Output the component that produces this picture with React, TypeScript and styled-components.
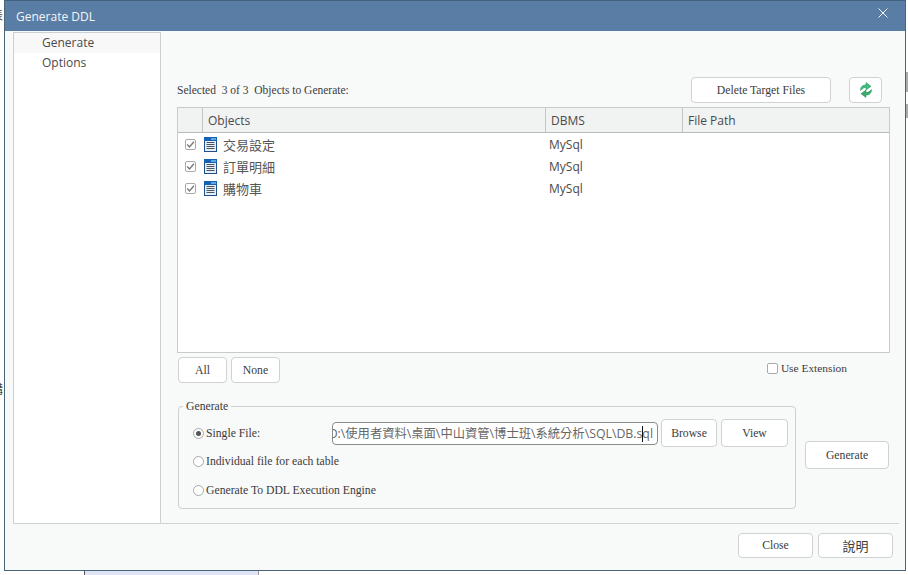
import React from 'react';
import styled, { createGlobalStyle } from 'styled-components';

const serif = '"Liberation Serif", "Noto Sans CJK TC", serif';
const sans = '"Open Sans", "Noto Sans CJK TC", sans-serif';

const GlobalStyle = createGlobalStyle`
  html, body {
    margin: 0;
    padding: 0;
    background: #fff;
    overflow: hidden;
  }
  * {
    box-sizing: border-box;
  }
`;

const Page = styled.div`
  position: relative;
  width: 908px;
  height: 575px;
  padding: 0 2px 4px 4px;
  background: #fff;
`;

const BackdropStrip = styled.div`
  position: absolute;
  left: 84px;
  bottom: 0;
  width: 175px;
  height: 4px;
  background: #dfe5f7;
  border-left: 1px solid #555;
  border-right: 1px solid #999;
`;

const BackdropGlyph = styled.span<{ $top: number }>`
  position: absolute;
  top: ${({ $top }) => $top}px;
  left: -9px;
  font: 12px/14px ${sans};
  color: #444;
`;

const BackdropTick = styled.div<{ $top: number; $height: number }>`
  position: absolute;
  top: ${({ $top }) => $top}px;
  right: 0;
  width: 2px;
  height: ${({ $height }) => $height}px;
  background: #a9abac;
`;

const Window = styled.div`
  position: relative;
  display: flex;
  flex-direction: column;
  height: 100%;
  background: #f8f9f9;
  border: 1px solid #4c6478;
  border-top-color: #44607f;
`;

const TitleBar = styled.div`
  display: flex;
  align-items: center;
  justify-content: space-between;
  flex: 0 0 30px;
  padding: 0 17px 0 11px;
  background: #5a7da5;
  color: #f2f5f8;
  font: 12px ${sans};
`;

const CloseIcon = styled.svg`
  width: 10px;
  height: 10px;
  margin-bottom: 7px;
`;

const Body = styled.div`
  display: flex;
  flex: 0 0 492px;
  margin: 1px 6px 0 8px;
  border-bottom: 1px solid #d0d2d2;
`;

const Sidebar = styled.nav`
  flex: 0 0 148px;
  background: #fff;
  border: 1px solid #cdd0d0;
  border-bottom: none;
`;

const NavItem = styled.div<{ $active?: boolean }>`
  height: 20px;
  padding-left: 28px;
  font: 12px/20px ${sans};
  color: #4a4a4a;
  background: ${({ $active }) => ($active ? '#f8f8f8' : 'transparent')};
`;

const Main = styled.div`
  flex: 1;
  display: flex;
  flex-direction: column;
  padding: 45px 9px 0 16px;
`;

const TopRow = styled.div`
  display: flex;
  align-items: center;
  height: 26px;
  margin-bottom: 4px;
  padding-right: 8px;
`;

const SerifLabel = styled.span`
  font: 11.7px ${serif};
  color: #3c3c3c;
  white-space: pre;
`;

const SelectedLabel = styled(SerifLabel)`
  flex: 1;
  font-size: 11.5px;
`;

const ExtensionLabel = styled(SerifLabel)`
  font-size: 11.4px;
`;

const Button = styled.button<{ $width: number; $height?: number }>`
  flex: 0 0 ${({ $width }) => $width}px;
  width: ${({ $width }) => $width}px;
  height: ${({ $height }) => $height ?? 26}px;
  padding: 0;
  display: inline-flex;
  align-items: center;
  justify-content: center;
  background: #fff;
  border: 1px solid #d0d2d2;
  border-radius: 4px;
  font: 11.7px ${serif};
  color: #3c3c3c;
`;

const HelpButton = styled(Button)`
  font: 13px ${sans};
`;

const RefreshButton = styled(Button)`
  margin-left: 18px;
`;

const Table = styled.div`
  display: flex;
  flex-direction: column;
  height: 246px;
  background: #fff;
  border: 1px solid #c9cbcb;
`;

const TableHeader = styled.div`
  display: grid;
  grid-template-columns: 24px 343px 137px 1fr;
  flex: 0 0 25px;
  background: #f1f2f2;
  border-bottom: 1px solid #b9bbbb;
`;

const HeaderCell = styled.div`
  height: 24px;
  padding-left: 5px;
  border-left: 1px solid #c4c6c6;
  font: 12px/25px ${sans};
  color: #4a4a4a;

  &:first-child {
    border-left: none;
  }
`;

const TableRow = styled.div`
  display: grid;
  grid-template-columns: 24px 343px 137px 1fr;
  align-items: center;
  height: 22px;
`;

const CheckCell = styled.div`
  display: flex;
  justify-content: center;
  padding-left: 1px;
`;

const ObjectCell = styled.div`
  display: flex;
  align-items: center;
  gap: 6px;
  padding-left: 2px;
  font: 13px ${sans};
  color: #555;
`;

const DbmsCell = styled.div`
  padding-left: 4px;
  font: 12px ${sans};
  color: #4a4a4a;
`;

const CheckBox = styled.span`
  display: inline-flex;
  align-items: center;
  justify-content: center;
  width: 11px;
  height: 11px;
  background: #fff;
  border: 1px solid #a8aaaa;
  border-radius: 2px;
`;

const ListActions = styled.div`
  display: flex;
  align-items: flex-start;
  gap: 4px;
  height: 53px;
  padding: 4px 0 0 1px;
`;

const UseExtension = styled.label`
  display: flex;
  align-items: center;
  gap: 3px;
  margin: 5px 0 0 auto;
  padding-right: 43px;
`;

const BottomRow = styled.div`
  display: flex;
  gap: 9px;
  padding-left: 1px;
`;

const GroupBox = styled.div`
  position: relative;
  width: 618px;
  height: 103px;
  padding: 12px 0 0 14px;
  border: 1px solid #cdd0d0;
  border-radius: 4px;
`;

const GroupTitle = styled.span`
  position: absolute;
  top: -7px;
  left: 4px;
  padding: 0 3px;
  background: #f8f9f9;
  font: 11.7px ${serif};
  color: #3c3c3c;
`;

const FileRow = styled.div`
  display: flex;
  align-items: center;
  height: 28px;
`;

const RadioRow = styled.div<{ $offset: number }>`
  display: flex;
  align-items: center;
  gap: 2px;
  height: 14px;
  margin-top: ${({ $offset }) => $offset}px;
`;

const SingleFile = styled(RadioRow)`
  flex: 0 0 139px;
`;

const Radio = styled.span<{ $checked?: boolean }>`
  display: inline-flex;
  align-items: center;
  justify-content: center;
  width: 11px;
  height: 11px;
  background: #fff;
  border: 1px solid #a8aaaa;
  border-radius: 50%;

  &::after {
    content: '';
    display: ${({ $checked }) => ($checked ? 'block' : 'none')};
    width: 5px;
    height: 5px;
    border-radius: 50%;
    background: #555;
  }
`;

const PathField = styled.div`
  position: relative;
  display: flex;
  justify-content: flex-end;
  flex: 0 0 326px;
  height: 23px;
  overflow: hidden;
  padding-right: 4px;
  background: #fff;
  border: 1px solid #8a8c8c;
  border-radius: 4px;
  font: 12.3px/21px ${sans};
  color: #666;
  white-space: nowrap;
`;

const Caret = styled.span`
  position: absolute;
  top: 3px;
  right: 14px;
  width: 1px;
  height: 16px;
  background: #111;
`;

const BrowseButton = styled(Button)`
  margin-left: 3px;
`;

const ViewButton = styled(Button)`
  margin-left: 4px;
`;

const GenerateColumn = styled.div`
  padding-top: 35px;
`;

const Footer = styled.div`
  display: flex;
  justify-content: flex-end;
  gap: 5px;
  padding: 9px 12px 0 0;
`;

const Check = () => (
  <svg width="9" height="9" viewBox="0 0 9 9">
    <path d="M1.2 4.6 3.5 7 7.9 1.8" fill="none" stroke="#77797a" strokeWidth="1.4" />
  </svg>
);

const TableIcon = () => (
  <svg width="13" height="15" viewBox="0 0 13 15">
    <rect x="0.5" y="0.5" width="12" height="14" fill="#e8eef6" stroke="#1d4f8c" />
    <rect x="0" y="0" width="13" height="4" fill="#1762b0" />
    <rect x="7" y="1" width="5" height="2" fill="#5aa8e6" />
    <path d="M2.5 5.5h8M2.5 7.5h8M2.5 9.5h8M2.5 11.5h8" stroke="#4a5562" />
  </svg>
);

const RefreshIcon = () => (
  <svg width="14" height="16" viewBox="0 0 14 16">
    <path d="M1.6 8.5C1.2 5 3.6 3 7 3V.6l5 3.7-5 3.6V5.5C5 5.4 3.6 6.3 1.6 8.5z" fill="#3fbf80" stroke="#1f8a52" strokeWidth=".5" />
    <path d="M12.4 7.5c.4 3.5-2 5.5-5.4 5.5v2.4L2 11.7l5-3.6v2.4c2 .1 3.4-.8 5.4-3z" fill="#36ad6f" stroke="#1f8a52" strokeWidth=".5" />
  </svg>
);

const objects = ['交易設定', '訂單明細', '購物車'];

export default function App() {
  return (
    <Page>
      <GlobalStyle />
      <BackdropStrip />
      <BackdropGlyph $top={9}>表</BackdropGlyph>
      <BackdropGlyph $top={383}>購</BackdropGlyph>
      <BackdropTick $top={72} $height={20} />
      <BackdropTick $top={104} $height={14} />
      <Window>
        <TitleBar>
          Generate DDL
          <CloseIcon viewBox="0 0 10 10">
            <path d="M.5.5l9 9M9.5.5l-9 9" stroke="#f4f6f9" strokeWidth="1" />
          </CloseIcon>
        </TitleBar>
        <Body>
          <Sidebar>
            <NavItem $active>Generate</NavItem>
            <NavItem>Options</NavItem>
          </Sidebar>
          <Main>
            <TopRow>
              <SelectedLabel>Selected  3 of 3  Objects to Generate:</SelectedLabel>
              <Button $width={140}>Delete Target Files</Button>
              <RefreshButton $width={33}>
                <RefreshIcon />
              </RefreshButton>
            </TopRow>
            <Table>
              <TableHeader>
                <HeaderCell />
                <HeaderCell>Objects</HeaderCell>
                <HeaderCell>DBMS</HeaderCell>
                <HeaderCell>File Path</HeaderCell>
              </TableHeader>
              {objects.map(name => (
                <TableRow key={name}>
                  <CheckCell>
                    <CheckBox>
                      <Check />
                    </CheckBox>
                  </CheckCell>
                  <ObjectCell>
                    <TableIcon />
                    {name}
                  </ObjectCell>
                  <DbmsCell>MySql</DbmsCell>
                  <div />
                </TableRow>
              ))}
            </Table>
            <ListActions>
              <Button $width={49}>All</Button>
              <Button $width={49}>None</Button>
              <UseExtension>
                <CheckBox />
                <ExtensionLabel>Use Extension</ExtensionLabel>
              </UseExtension>
            </ListActions>
            <BottomRow>
              <GroupBox>
                <GroupTitle>Generate</GroupTitle>
                <FileRow>
                  <SingleFile $offset={0}>
                    <Radio $checked />
                    <SerifLabel>Single File:</SerifLabel>
                  </SingleFile>
                  <PathField>
                    D:\使用者資料\桌面\中山資管\博士班\系統分析\SQL\DB.sql
                    <Caret />
                  </PathField>
                  <BrowseButton $width={56} $height={28}>Browse</BrowseButton>
                  <ViewButton $width={67} $height={28}>View</ViewButton>
                </FileRow>
                <RadioRow $offset={7}>
                  <Radio />
                  <SerifLabel>Individual file for each table</SerifLabel>
                </RadioRow>
                <RadioRow $offset={15}>
                  <Radio />
                  <SerifLabel>Generate To DDL Execution Engine</SerifLabel>
                </RadioRow>
              </GroupBox>
              <GenerateColumn>
                <Button $width={84} $height={28}>Generate</Button>
              </GenerateColumn>
            </BottomRow>
          </Main>
        </Body>
        <Footer>
          <Button $width={75} $height={25}>Close</Button>
          <HelpButton $width={75} $height={25}>說明</HelpButton>
        </Footer>
      </Window>
    </Page>
  );
}
